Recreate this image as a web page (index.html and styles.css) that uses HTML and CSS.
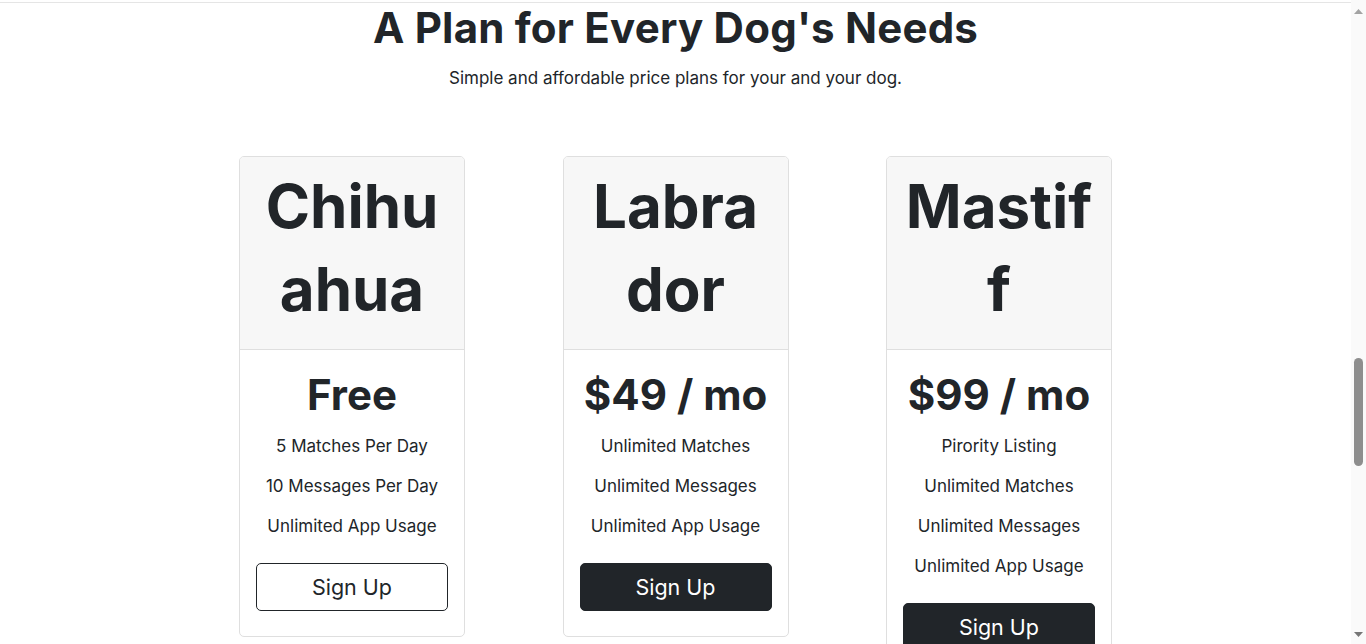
FILE: index.html
```html
<!DOCTYPE html>
<html lang="en">
<head>
<meta charset="utf-8">
<title>TinDog Pricing</title>
<link rel="stylesheet" href="styles.css">
</head>
<body>
<section class="pricing">
  <h2 class="pricing-title">A Plan for Every Dog's Needs</h2>
  <p class="pricing-lead">Simple and affordable price plans for your and your dog.</p>

  <div class="plans">
    <div class="plan">
      <div class="plan-header">
        <h3 class="plan-name">Chihuahua</h3>
      </div>
      <div class="plan-body">
        <h2 class="plan-price">Free</h2>
        <ul class="plan-features">
          <li>5 Matches Per Day</li>
          <li>10 Messages Per Day</li>
          <li>Unlimited App Usage</li>
        </ul>
        <button class="btn btn-outline" type="button">Sign Up</button>
      </div>
    </div>

    <div class="plan">
      <div class="plan-header">
        <h3 class="plan-name">Labrador</h3>
      </div>
      <div class="plan-body">
        <h2 class="plan-price">$49 / mo</h2>
        <ul class="plan-features">
          <li>Unlimited Matches</li>
          <li>Unlimited Messages</li>
          <li>Unlimited App Usage</li>
        </ul>
        <button class="btn btn-dark" type="button">Sign Up</button>
      </div>
    </div>

    <div class="plan">
      <div class="plan-header">
        <h3 class="plan-name">Mastiff</h3>
      </div>
      <div class="plan-body">
        <h2 class="plan-price">$99 / mo</h2>
        <ul class="plan-features">
          <li>Pirority Listing</li>
          <li>Unlimited Matches</li>
          <li>Unlimited Messages</li>
          <li>Unlimited App Usage</li>
        </ul>
        <button class="btn btn-dark" type="button">Sign Up</button>
      </div>
    </div>
  </div>
</section>

<aside class="scrollbar" aria-hidden="true">
  <svg class="scroll-arrow scroll-up" width="9" height="5" viewBox="0 0 9 5"><polygon points="4.5,0 9,5 0,5"/></svg>
  <div class="scroll-track"><div class="scroll-thumb"></div></div>
  <svg class="scroll-arrow scroll-down" width="9" height="5" viewBox="0 0 9 5"><polygon points="0,0 9,0 4.5,5"/></svg>
</aside>
</body>
</html>
```
FILE: styles.css
```css
body {
  margin: 0;
  padding: 2px 15px 0 0;
  font-family: Inter, "Noto Sans", sans-serif;
  color: #212529;
  background: #ffffff;
}

.pricing {
  border-top: 1px solid #e5e5e5;
  text-align: center;
  padding-bottom: 60px;
}

.pricing-title {
  margin: 0;
  font-size: 42px;
  font-weight: 700;
  line-height: 50px;
  letter-spacing: 0.22px;
}

.pricing-lead {
  margin: 13px 0 0;
  font-size: 17px;
  line-height: 24px;
}

.plans {
  display: grid;
  grid-template-columns: repeat(3, 226px);
  column-gap: 97.5px;
  justify-content: center;
  align-items: start;
  margin-top: 66px;
}

.plan {
  border: 1px solid #dfdfdf;
  border-radius: 5px;
  overflow: hidden;
  background: #ffffff;
}

.plan-header {
  background: #f7f7f7;
  border-bottom: 1px solid #dfdfdf;
  padding: 8px 16px 18px;
}

.plan-name {
  margin: 0;
  font-size: 60px;
  font-weight: 700;
  line-height: 83px;
  overflow-wrap: anywhere;
}

.plan-body {
  padding: 20px 16px 25px;
}

.plan-price {
  margin: 0;
  font-size: 42px;
  font-weight: 700;
  line-height: 50px;
}

.plan-features {
  list-style: none;
  margin: 6px 0 17px;
  padding: 0;
  font-size: 17px;
  line-height: 40px;
}

.btn {
  display: block;
  width: 100%;
  height: 48px;
  border: 1px solid #212529;
  border-radius: 5px;
  font-family: Inter, "Noto Sans", sans-serif;
  font-size: 21.5px;
  line-height: 46px;
  padding: 0;
  cursor: pointer;
}

.btn-outline {
  background: #ffffff;
  color: #212529;
}

.btn-dark {
  background: #212529;
  color: #ffffff;
}

/* browser scrollbar overlay */
.scrollbar {
  position: fixed;
  top: 0;
  right: 0;
  bottom: 0;
  width: 15px;
  background: #fafafa;
  display: flex;
  flex-direction: column;
  align-items: center;
}

.scroll-arrow {
  display: block;
  flex: none;
}

.scroll-up {
  margin-top: 9px;
  fill: #a3a3a3;
}

.scroll-down {
  margin-bottom: 7px;
  fill: #767676;
}

.scroll-track {
  flex: 1;
  width: 9px;
  padding-top: 344px;
}

.scroll-thumb {
  width: 9px;
  height: 108px;
  border-radius: 5px;
  background: #8e8e8e;
}
```
